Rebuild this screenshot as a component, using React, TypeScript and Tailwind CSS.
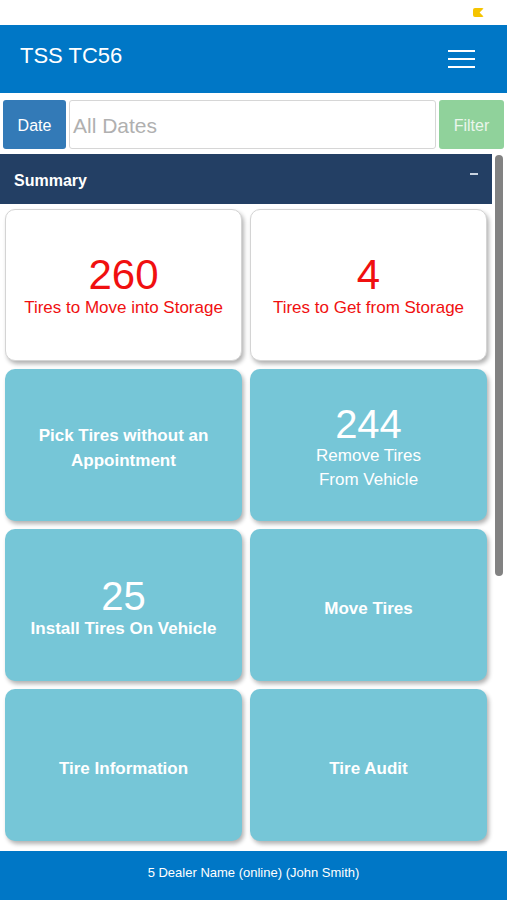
import React from "react";

type Tile = {
  count?: string;
  label: string;
  bold?: boolean;
  white?: boolean;
};

const tiles: Tile[] = [
  { count: "260", label: "Tires to Move into Storage", white: true },
  { count: "4", label: "Tires to Get from Storage", white: true },
  { label: "Pick Tires without an Appointment", bold: true },
  { count: "244", label: "Remove Tires From Vehicle" },
  { count: "25", label: "Install Tires On Vehicle", bold: true },
  { label: "Move Tires", bold: true },
  { label: "Tire Information", bold: true },
  { label: "Tire Audit", bold: true },
];

function TileCard({ tile }: { tile: Tile }) {
  if (tile.white) {
    return (
      <div className="h-[152px] rounded-[10px] border border-[#d4d4d4] bg-white shadow-[2px_3px_4px_rgba(0,0,0,0.3)] flex flex-col items-center justify-center pt-[2px] text-[#f01010]">
        <div className="text-[42px] leading-[44px]">{tile.count}</div>
        <div className="text-[17px] leading-[22px]">{tile.label}</div>
      </div>
    );
  }
  return (
    <div className="h-[152px] rounded-[10px] bg-[#76c6d7] shadow-[2px_3px_4px_rgba(0,0,0,0.3)] flex flex-col items-center justify-center px-6 pt-[6px] text-white text-center">
      {tile.count && <div className="text-[40px] leading-[40px]">{tile.count}</div>}
      <div
        className={
          tile.bold
            ? "text-[17px] leading-[25px] font-bold"
            : "text-[17px] leading-[24px] w-[120px]"
        }
      >
        {tile.label}
      </div>
    </div>
  );
}

export default function App() {
  return (
    <div
      className="w-[507px] h-[900px] bg-white flex flex-col overflow-hidden"
      style={{ fontFamily: '"Liberation Sans", Arial, sans-serif' }}
    >
      {/* status bar */}
      <div className="h-[25px] flex justify-end items-center pr-[23px]">
        <div className="w-[11px] h-[9px] bg-[#f5c400] rounded-[2px] [clip-path:polygon(0_0,100%_0,60%_50%,100%_100%,0_100%)]" />
      </div>

      {/* header */}
      <div className="h-[68px] bg-[#0077c6] flex items-start justify-between pt-[18px] pl-[20px] pr-[32px]">
        <span className="text-white text-[22px] leading-[26px]">TSS TC56</span>
        <div className="flex flex-col gap-[6px] mt-[7px]">
          <span className="block w-[27px] h-[2px] bg-white" />
          <span className="block w-[27px] h-[2px] bg-white" />
          <span className="block w-[27px] h-[2px] bg-white" />
        </div>
      </div>

      {/* filter row */}
      <div className="flex gap-[3px] px-[3px] pt-[7px] pb-[5px]">
        <button className="w-[63px] h-[49px] rounded-[3px] bg-[#337ab7] text-white text-[16px] pt-[2px]">
          Date
        </button>
        <div className="flex-1 h-[49px] rounded-[3px] border border-[#d6d6d6] flex items-center pl-[3px] pt-[2px] text-[21px] text-[#b0b0b0]">
          All Dates
        </div>
        <button className="w-[65px] h-[49px] rounded-[3px] bg-[#90d29b] text-[#eaf6ec] text-[16px] pt-[2px]">
          Filter
        </button>
      </div>

      {/* content */}
      <div className="flex-1 flex min-h-0">
        <div className="w-[492px] flex flex-col">
          <div className="h-[50px] bg-[#233f64] flex items-center justify-between pl-[14px] pr-[14px] pt-[3px]">
            <span className="text-white font-bold text-[16px]">Summary</span>
            <span className="block w-[8px] h-[2px] bg-[#c9d3e0] -mt-[13px]" />
          </div>
          <div className="grid grid-cols-2 gap-[8px] px-[5px] pt-[5px]">
            {tiles.map((t, i) => (
              <TileCard key={i} tile={t} />
            ))}
          </div>
        </div>
        <div className="flex-1 pl-[3px] pt-[1px]">
          <div className="w-[8px] h-[421px] rounded-full bg-[#828282]" />
        </div>
      </div>

      {/* footer */}
      <div className="h-[49px] bg-[#0077c6] flex justify-center pt-[14px]">
        <span className="text-white text-[13px] leading-[16px]">5 Dealer Name (online) (John Smith)</span>
      </div>
    </div>
  );
}
